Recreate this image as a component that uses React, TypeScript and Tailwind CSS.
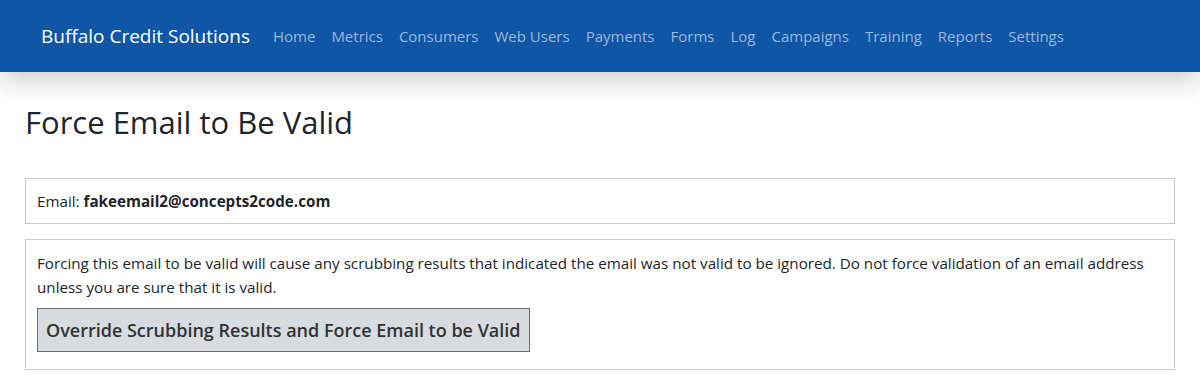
export default function App() {
  const links = ["Home", "Metrics", "Consumers", "Web Users", "Payments", "Forms", "Log", "Campaigns", "Training", "Reports", "Settings"];
  return (
    <div className="min-h-[380px] bg-white text-[#212529]" style={{ fontFamily: '"Open Sans", "Noto Sans", sans-serif' }}>
      {/* ── Navbar ── */}
      <nav className="relative z-10 h-[72px] bg-[#0f56a6] flex items-center pl-[41px] shadow-[0_8px_28px_rgba(0,0,0,0.2)]">
        <span className="text-[19px] text-white mr-[15px]">Buffalo Credit Solutions</span>
        <div className="flex items-center">
          {links.map((l) => (
            <a key={l} href="#" className="px-[8px] text-[15px] text-[#9fb5d8]">
              {l}
            </a>
          ))}
        </div>
      </nav>

      {/* ── Content ── */}
      <main className="px-[25px] pt-[32px]">
        <h1 className="text-[31px] font-medium leading-[37px] mb-[37px]">Force Email to Be Valid</h1>

        <div className="border border-[#ccc] px-[11px] py-[10px] text-[15.2px] leading-[24px] mb-[15px]">
          Email: <b className="font-bold">fakeemail2@concepts2code.com</b>
        </div>

        <div className="border border-[#ccc] px-[11px] pt-[11px] pb-[17px] text-[15.2px] leading-[24px]">
          <p>
            Forcing this email to be valid will cause any scrubbing results that indicated the email was not valid to be ignored. Do not force
            validation of an email address unless you are sure that it is valid.
          </p>
          <button className="mt-[9px] h-[44px] px-[8px] bg-[#d6dce0] border border-[#6c6c6c] text-[18px] font-semibold text-[#333]">
            Override Scrubbing Results and Force Email to be Valid
          </button>
        </div>
      </main>
    </div>
  );
}
